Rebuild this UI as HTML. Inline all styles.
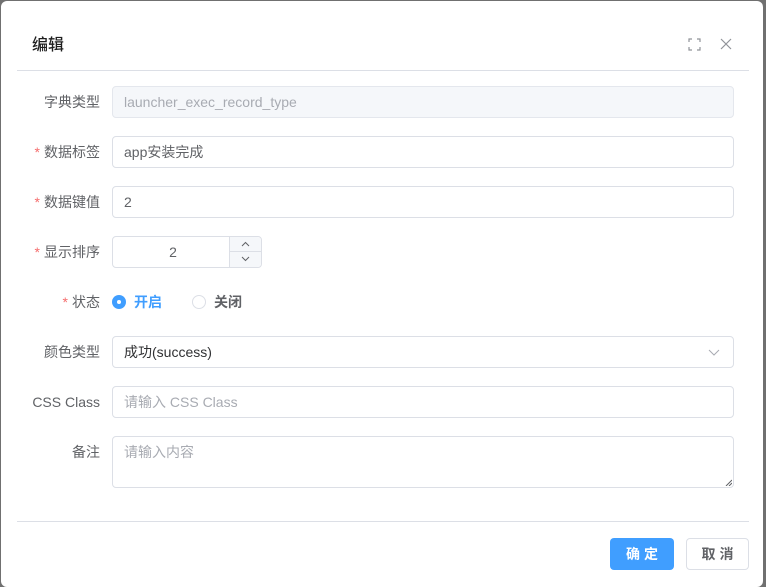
<!DOCTYPE html>
<html><head><meta charset="utf-8"><style>
*{box-sizing:border-box;margin:0;padding:0}
body{width:766px;height:586px;background:#707070;font-family:"Liberation Sans","Noto Sans CJK SC",sans-serif;font-size:14px;color:#606266;position:relative;overflow:hidden}
.dlg{position:absolute;left:1px;top:1px;width:762px;height:586px;background:#fff;border-radius:6px}
.abs{position:absolute}
.title{left:32px;top:31px;font-size:16px;color:#1f1f1f;font-weight:500}
.hr{height:1px;background:#dcdfe6;left:17px;width:732px}
.lbl{position:absolute;right:666px;text-align:right;color:#606266;white-space:nowrap;line-height:20px}
.lbl b{color:#f56c6c;font-weight:normal;margin-right:4px}
.inp{position:absolute;left:112px;width:622px;height:32px;border:1px solid #dcdfe6;border-radius:4px;padding:0 11px;line-height:30px;color:#606266;white-space:nowrap}
.ph{color:#a8abb2}
.btn{position:absolute;top:538px;height:32px;border-radius:4px;line-height:32px;text-align:center;font-weight:bold;letter-spacing:4px;padding-left:4px}
</style></head><body>
<div class="dlg">
</div>
<div class="abs title">编辑</div>
<svg class="abs" style="left:688px;top:38px" width="13" height="13" viewBox="0 0 13 13" fill="none" stroke="#909399" stroke-width="1.2"><path d="M1 4V1h3M9 1h3v3M12 9v3H9M4 12H1V9"/></svg>
<svg class="abs" style="left:720px;top:38px" width="12" height="12" viewBox="0 0 12 12" stroke="#909399" stroke-width="1.2"><path d="M1 1l10 10M11 1L1 11"/></svg>
<div class="abs hr" style="top:70px"></div>

<div class="lbl" style="top:92px">字典类型</div>
<div class="inp" style="top:86px;background:#f5f7fa;border-color:#e4e7ed"><span class="ph">launcher_exec_record_type</span></div>

<div class="lbl" style="top:142px"><b>*</b>数据标签</div>
<div class="inp" style="top:136px">app安装完成</div>

<div class="lbl" style="top:192px"><b>*</b>数据键值</div>
<div class="inp" style="top:186px">2</div>

<div class="lbl" style="top:242px"><b>*</b>显示排序</div>
<div class="inp" style="top:236px;width:150px;padding:0;text-align:center"><span style="margin-right:28px">2</span>
<div class="abs" style="right:0;top:0;width:32px;height:30px;border-left:1px solid #dcdfe6;background:#f5f7fa;border-radius:0 4px 4px 0">
<div style="height:15px;border-bottom:1px solid #dcdfe6"></div>
<svg class="abs" style="left:11px;top:4px" width="9" height="6" viewBox="0 0 9 6" fill="none" stroke="#606266"><path d="M1 5l3.5-3.5L8 5"/></svg>
<svg class="abs" style="left:11px;top:19px" width="9" height="6" viewBox="0 0 9 6" fill="none" stroke="#606266"><path d="M1 1l3.5 3.5L8 1"/></svg>
</div></div>

<div class="lbl" style="top:292px"><b>*</b>状态</div>
<div class="abs" style="left:112px;top:295px;width:14px;height:14px;border-radius:50%;background:#409eff"><div style="margin:5px;width:4px;height:4px;border-radius:50%;background:#fff"></div></div>
<div class="abs" style="left:134px;top:292px;line-height:20px;color:#409eff;font-weight:bold">开启</div>
<div class="abs" style="left:192px;top:295px;width:14px;height:14px;border-radius:50%;border:1px solid #dcdfe6"></div>
<div class="abs" style="left:214px;top:292px;line-height:20px;color:#606266;font-weight:bold">关闭</div>

<div class="lbl" style="top:342px">颜色类型</div>
<div class="inp" style="top:336px;color:#303133">成功(success)
<svg class="abs" style="right:13px;top:12px" width="12" height="7" viewBox="0 0 12 7" fill="none" stroke="#a8abb2"><path d="M1 1l5 5 5-5"/></svg></div>

<div class="lbl" style="top:392px">CSS Class</div>
<div class="inp" style="top:386px"><span class="ph">请输入 CSS Class</span></div>

<div class="lbl" style="top:442px">备注</div>
<div class="inp" style="top:436px;height:52px;line-height:30px;padding-top:0"><span class="ph">请输入内容</span>
<svg class="abs" style="right:1px;bottom:1px" width="7" height="7" viewBox="0 0 7 7" stroke="#606266"><path d="M1 7L7 1M4 7L7 4"/></svg></div>

<div class="abs hr" style="top:521px"></div>
<div class="btn" style="left:610px;width:64px;background:#409eff;color:#fff">确定</div>
<div class="btn" style="left:686px;width:63px;border:1px solid #dcdfe6;color:#606266;line-height:30px">取消</div>
</body></html>
